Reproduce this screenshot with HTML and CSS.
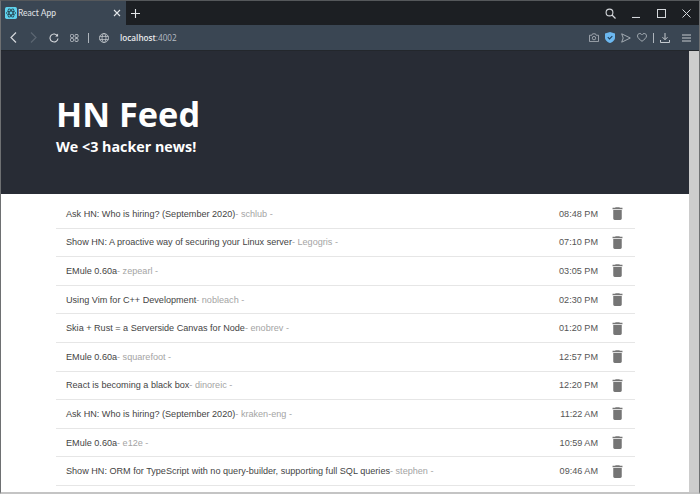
FILE: index.html
```html
<!DOCTYPE html>
<html>
<head>
	<meta charset="utf-8">
	<title>React App</title>
	<link rel="stylesheet" href="styles.css">
</head>
<body>
	<div class="browser">
		<div class="tabstrip">
			<div class="tab">
				<svg class="favicon" width="12" height="12" viewBox="0 0 14 14"><rect width="14" height="14" rx="2" fill="#5fd3ee"/><g fill="none" stroke="#24444f" stroke-width=".9"><ellipse cx="7" cy="7" rx="5.5" ry="2.2"/><ellipse cx="7" cy="7" rx="5.5" ry="2.2" transform="rotate(60 7 7)"/><ellipse cx="7" cy="7" rx="5.5" ry="2.2" transform="rotate(120 7 7)"/></g></svg>
				<span class="tab-title">React App</span>
				<svg class="tab-close" width="8" height="8" viewBox="0 0 8 8"><path d="M1 1l6 6M7 1L1 7" stroke="#e4e7ea" stroke-width="1.1"/></svg>
			</div>
			<svg class="new-tab" width="9" height="9" viewBox="0 0 9 9"><path d="M4.5 0v9M0 4.5h9" stroke="#e4e7ea" stroke-width="1.1"/></svg>
			<div class="window-btns">
				<svg class="win-search" width="11" height="11" viewBox="0 0 11 11"><circle cx="4.5" cy="4.5" r="3.4" fill="none" stroke="#d5d8dc" stroke-width="1.1"/><path d="M7 7l3.5 3.5" stroke="#d5d8dc" stroke-width="1.3"/></svg>
				<svg class="win-min" width="9" height="9" viewBox="0 0 9 9"><path d="M0 8.5h8" stroke="#d5d8dc" stroke-width="1.1"/></svg>
				<svg class="win-max" width="9" height="9" viewBox="0 0 9 9"><rect x=".5" y=".5" width="8" height="8" fill="none" stroke="#d5d8dc"/></svg>
				<svg class="win-close" width="9" height="9" viewBox="0 0 9 9"><path d="M.5.5l8 8M8.5.5l-8 8" stroke="#d5d8dc" stroke-width="1"/></svg>
			</div>
		</div>
		<div class="toolbar">
			<svg class="nav-back" width="7" height="11" viewBox="0 0 7 11"><path d="M6 .5l-5 5 5 5" fill="none" stroke="#d5d8dc" stroke-width="1.2"/></svg>
			<svg class="nav-forward" width="7" height="11" viewBox="0 0 7 11"><path d="M1 .5l5 5-5 5" fill="none" stroke="#5b6672" stroke-width="1.2"/></svg>
			<svg class="nav-reload" width="10" height="10" viewBox="0 0 11 11"><path d="M9.3 3.2A4.4 4.4 0 1 0 9.9 6" fill="none" stroke="#d5d8dc" stroke-width="1.2"/><path d="M10 .5v3.3H6.8z" fill="#d5d8dc"/></svg>
			<svg class="nav-grid" width="9" height="8" viewBox="0 0 10 9"><g fill="none" stroke="#c4c9ce" stroke-width="1"><rect x=".5" y=".5" width="3.4" height="3.4" rx="1"/><rect x="5.6" y=".5" width="3.4" height="3.4" rx="1"/><rect x=".5" y="5" width="3.4" height="3.4" rx="1"/><rect x="5.6" y="5" width="3.4" height="3.4" rx="1"/></g></svg>
			<span class="sep"></span>
			<svg class="nav-globe" width="10" height="10" viewBox="0 0 10 10"><g fill="none" stroke="#c4c9ce" stroke-width=".8"><circle cx="5" cy="5" r="4.5"/><ellipse cx="5" cy="5" rx="2" ry="4.5"/><path d="M.5 3.4h9M.5 6.6h9"/></g></svg>
			<span class="url"><b>localhost</b>:4002</span>
			<div class="toolbar-right">
				<svg width="10" height="9" viewBox="0 0 11 10"><path d="M.5 2.500h2.600l.8-1.600h3.200l.8 1.600h2.600v7H.5z" fill="none" stroke="#aeb5bc" stroke-width=".9"/><circle cx="5.500" cy="5.700" r="1.900" fill="none" stroke="#aeb5bc" stroke-width=".9"/></svg>
				<svg width="10" height="11" viewBox="0 0 10 11"><path d="M5 0l5 1.500v4.200C10 8.400 7.400 10 5 11 2.600 10 0 8.400 0 5.700V1.500z" fill="#6cb8f0"/><path d="M2.800 5.200l1.700 1.700 2.800-2.800" fill="none" stroke="#1f3f5c" stroke-width="1.100"/></svg>
				<svg width="10" height="10" viewBox="0 0 10 10"><path d="M.7.8l8.600 4.200-8.600 4.200 1.500-4.200z" fill="none" stroke="#aeb5bc" stroke-width=".9"/></svg>
				<svg width="10" height="9" viewBox="0 0 10 9"><path d="M5 8.300C2.800 6.600.5 5 .5 2.900.5 1.500 1.500.5 2.800.5 3.700.5 4.500 1 5 1.800 5.500 1 6.300.5 7.200.5c1.300 0 2.300 1 2.300 2.400C9.500 5 7.200 6.600 5 8.300z" fill="none" stroke="#aeb5bc" stroke-width=".9"/></svg>
				<span class="sep"></span>
				<svg class="tool-download" width="10" height="10" viewBox="0 0 10 10"><path d="M5 0v6.500M2.500 4.200L5 6.700l2.500-2.500M.5 7v2.500h9V7" fill="none" stroke="#c4c9ce" stroke-width="1"/></svg>
				<svg class="tool-menu" width="9" height="8" viewBox="0 0 9 8"><path d="M0 1h9M0 4h9M0 7h9" stroke="#c4c9ce" stroke-width="1"/></svg>
			</div>
		</div>
		<div class="viewport">
			<div class="page">
				<header class="hero">
					<h1>HN Feed</h1>
					<h3>We &lt;3 hacker news!</h3>
				</header>
				<ul class="feed">
					<li class="row"><span class="title">Ask HN: Who is hiring? (September 2020)</span><span class="author">- schlub -</span><span class="time">08:48 PM</span><svg class="trash" viewBox="0 0 24 24"><path d="M6 19c0 1.100.9 2 2 2h8c1.100 0 2-.9 2-2V7H6v12zM19 4h-3.500l-1-1h-5l-1 1H5v2h14V4z"/></svg></li>
					<li class="row"><span class="title">Show HN: A proactive way of securing your Linux server</span><span class="author">- Legogris -</span><span class="time">07:10 PM</span><svg class="trash" viewBox="0 0 24 24"><path d="M6 19c0 1.100.9 2 2 2h8c1.100 0 2-.9 2-2V7H6v12zM19 4h-3.500l-1-1h-5l-1 1H5v2h14V4z"/></svg></li>
					<li class="row"><span class="title">EMule 0.60a</span><span class="author">- zepearl -</span><span class="time">03:05 PM</span><svg class="trash" viewBox="0 0 24 24"><path d="M6 19c0 1.100.9 2 2 2h8c1.100 0 2-.9 2-2V7H6v12zM19 4h-3.500l-1-1h-5l-1 1H5v2h14V4z"/></svg></li>
					<li class="row"><span class="title">Using Vim for C++ Development</span><span class="author">- nobleach -</span><span class="time">02:30 PM</span><svg class="trash" viewBox="0 0 24 24"><path d="M6 19c0 1.100.9 2 2 2h8c1.100 0 2-.9 2-2V7H6v12zM19 4h-3.500l-1-1h-5l-1 1H5v2h14V4z"/></svg></li>
					<li class="row"><span class="title">Skia + Rust = a Serverside Canvas for Node</span><span class="author">- enobrev -</span><span class="time">01:20 PM</span><svg class="trash" viewBox="0 0 24 24"><path d="M6 19c0 1.100.9 2 2 2h8c1.100 0 2-.9 2-2V7H6v12zM19 4h-3.500l-1-1h-5l-1 1H5v2h14V4z"/></svg></li>
					<li class="row"><span class="title">EMule 0.60a</span><span class="author">- squarefoot -</span><span class="time">12:57 PM</span><svg class="trash" viewBox="0 0 24 24"><path d="M6 19c0 1.100.9 2 2 2h8c1.100 0 2-.9 2-2V7H6v12zM19 4h-3.500l-1-1h-5l-1 1H5v2h14V4z"/></svg></li>
					<li class="row"><span class="title">React is becoming a black box</span><span class="author">- dinoreic -</span><span class="time">12:20 PM</span><svg class="trash" viewBox="0 0 24 24"><path d="M6 19c0 1.100.9 2 2 2h8c1.100 0 2-.9 2-2V7H6v12zM19 4h-3.500l-1-1h-5l-1 1H5v2h14V4z"/></svg></li>
					<li class="row"><span class="title">Ask HN: Who is hiring? (September 2020)</span><span class="author">- kraken-eng -</span><span class="time">11:22 AM</span><svg class="trash" viewBox="0 0 24 24"><path d="M6 19c0 1.100.9 2 2 2h8c1.100 0 2-.9 2-2V7H6v12zM19 4h-3.500l-1-1h-5l-1 1H5v2h14V4z"/></svg></li>
					<li class="row"><span class="title">EMule 0.60a</span><span class="author">- e12e -</span><span class="time">10:59 AM</span><svg class="trash" viewBox="0 0 24 24"><path d="M6 19c0 1.100.9 2 2 2h8c1.100 0 2-.9 2-2V7H6v12zM19 4h-3.500l-1-1h-5l-1 1H5v2h14V4z"/></svg></li>
					<li class="row"><span class="title">Show HN: ORM for TypeScript with no query-builder, supporting full SQL queries</span><span class="author">- stephen -</span><span class="time">09:46 AM</span><svg class="trash" viewBox="0 0 24 24"><path d="M6 19c0 1.100.9 2 2 2h8c1.100 0 2-.9 2-2V7H6v12zM19 4h-3.500l-1-1h-5l-1 1H5v2h14V4z"/></svg></li>
				</ul>
			</div>
			<div class="scrollbar"></div>
		</div>
	</div>
</body>
</html>
```
FILE: styles.css
```css
* {
	box-sizing: border-box;
}

html, body {
	height: 100%;
	margin: 0;
	overflow: hidden;
}

body {
	font-family: "Liberation Sans", Arial, sans-serif;
}

.browser {
	display: flex;
	flex-direction: column;
	height: 494px;
	border-left: 1px solid #6e7072;
	border-right: 1px solid #6e7072;
	border-bottom: 2px solid #c4c4c4;
	border-top: 1px solid #55585b;
	background: #fff;
}

.tabstrip {
	display: flex;
	align-items: center;
	height: 24px;
	background: #1c1f23;
	flex: none;
}

.tab {
	display: flex;
	align-items: center;
	width: 125px;
	height: 100%;
	padding: 0 5px 0 4px;
	background: #3a4653;
}

.favicon {
	flex: none;
}

.tab-title {
	flex: 1;
	margin-left: 1px;
	font-family: Lato, sans-serif;
	font-size: 8.500px;
	color: #e4e7ea;
}

.new-tab {
	margin-left: 5px;
}

.window-btns {
	display: flex;
	align-items: center;
	margin-left: auto;
	padding-right: 8px;
}

.win-min {
	margin-left: 16px;
}

.win-max {
	margin-left: 16px;
}

.win-close {
	margin-left: 16px;
}

.toolbar {
	display: flex;
	align-items: center;
	height: 25px;
	flex: none;
	padding-left: 9px;
	background: #3a4653;
}

.nav-forward {
	margin-left: 13px;
}

.nav-reload {
	margin-left: 12px;
}

.nav-grid {
	margin-left: 11px;
}

.sep {
	width: 1px;
	height: 10px;
	margin-left: 9px;
	background: #aeb5bc;
}

.nav-globe {
	margin-left: 10px;
}

.url {
	margin-left: 11px;
	font-family: "Open Sans", sans-serif;
	font-size: 8.200px;
	color: #b6bcc3;
}

.url b {
	font-weight: 600;
	color: #e8eaec;
}

.toolbar-right {
	display: flex;
	align-items: center;
	gap: 6px;
	margin-left: auto;
	padding-right: 8px;
}

.toolbar-right .sep {
	margin-left: 0;
}

.tool-menu {
	margin-left: 6px;
}

.viewport {
	display: flex;
	flex: 1;
	min-height: 0;
	border-top: 1px solid #23272c;
}

.page {
	flex: 1;
	min-width: 0;
	overflow: hidden;
}

.scrollbar {
	width: 10px;
	flex: none;
	background: #cdcdcd;
}

.hero {
	height: 143px;
	padding: 41px 55px 0;
	background: #282c35;
	color: #fff;
	font-family: "Open Sans", sans-serif;
}

.hero h1 {
	margin: 0;
	font-size: 34.300px;
	line-height: 44px;
	font-weight: 700;
}

.hero h3 {
	margin: 0;
	font-size: 14.300px;
	line-height: 21px;
	font-weight: 700;
}

.feed {
	list-style: none;
	margin: 6px 0 0 55px;
	padding: 0;
	width: 579px;
}

.row {
	display: flex;
	align-items: center;
	height: 28.600px;
	padding-left: 10px;
	border-bottom: 1px solid #e6e6e6;
	font-size: 9.100px;
}

.title {
	color: #444;
}

.author {
	color: #a4a4a4;
}

.time {
	margin-left: auto;
	color: #555;
}

.trash {
	width: 17px;
	height: 17px;
	margin: 0 9px 0 11px;
	fill: #757575;
}
```
